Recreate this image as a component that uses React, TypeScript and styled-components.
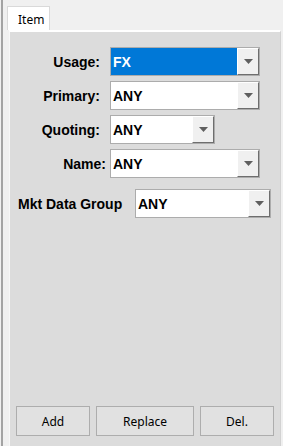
import styled, { createGlobalStyle } from "styled-components";

const GlobalStyle = createGlobalStyle`
  html, body {
    margin: 0;
    padding: 0;
    height: 446px;
    background: #f0f0f0;
    overflow: hidden;
  }
  #root {
    height: 446px;
  }
`;

const Frame = styled.div`
  display: flex;
  flex-direction: column;
  height: 446px;
  margin-left: 1px;
  border-left: 2px solid #a3a3a3;
  padding-top: 6px;
  box-sizing: border-box;
`;

const TabStrip = styled.div`
  display: flex;
  padding-left: 4px;
`;

const Tab = styled.div`
  position: relative;
  z-index: 1;
  width: 43px;
  height: 24px;
  box-sizing: border-box;
  border: 1px solid #d9d9d9;
  border-bottom: none;
  background: #ffffff;
  padding: 4px 0 0 10px;
  font-family: "Noto Sans", "DejaVu Sans", sans-serif;
  font-size: 12px;
  color: #000;
`;

const Panel = styled.div`
  flex: 1;
  display: flex;
  flex-direction: column;
  margin-left: 6px;
  width: 272px;
  box-sizing: border-box;
  background: #dcdcdc;
  border-top: 2px solid #ffffff;
  border-left: 1px solid #f7f7f7;
  border-right: 1px solid #d2d2d2;
  padding: 15px 0 10px 0;
`;

const Form = styled.div`
  display: flex;
  flex-direction: column;
  gap: 5px;
`;

const Row = styled.div<{ $top?: number }>`
  display: flex;
  align-items: center;
  height: 29px;
  margin-top: ${({ $top }) => $top ?? 0}px;
`;

const Label = styled.label<{ $width: number; $gap: number; $align?: string }>`
  width: ${({ $width }) => $width}px;
  margin-right: ${({ $gap }) => $gap}px;
  text-align: ${({ $align }) => $align ?? "right"};
  padding-left: ${({ $align }) => ($align === "left" ? 8 : 0)}px;
  box-sizing: border-box;
  font-family: "Liberation Sans", Arial, sans-serif;
  font-weight: bold;
  font-size: 14px;
  color: #000;
  white-space: nowrap;
`;

const Combo = styled.div<{ $width: number; $selected?: boolean }>`
  display: flex;
  width: ${({ $width }) => $width}px;
  height: 29px;
  box-sizing: border-box;
  border: 1px solid #acacac;
  background: ${({ $selected }) => ($selected ? "#0078d7" : "#ffffff")};
`;

const ComboValue = styled.div<{ $selected?: boolean }>`
  flex: 1;
  display: flex;
  align-items: center;
  padding-left: 2px;
  font-family: "Liberation Sans", Arial, sans-serif;
  font-weight: bold;
  font-size: 14px;
  color: ${({ $selected }) => ($selected ? "#ffffff" : "#000000")};
`;

const ArrowButton = styled.div`
  display: flex;
  align-items: center;
  justify-content: center;
  width: 22px;
  box-sizing: border-box;
  background: #f0f0f0;
  border-top: 1px solid #ffffff;
  border-left: 1px solid #ffffff;
  border-right: 1px solid #6e6e6e;
  border-bottom: 1px solid #6e6e6e;
`;

const ButtonBar = styled.div`
  display: flex;
  gap: 6px;
  margin-top: auto;
  padding-left: 6px;
`;

const ActionButton = styled.button<{ $width: number }>`
  width: ${({ $width }) => $width}px;
  height: 30px;
  border: 1px solid #adadad;
  background: #e1e1e1;
  font-family: "Noto Sans", "DejaVu Sans", sans-serif;
  font-size: 12px;
  color: #000;
  padding: 0;
`;

function ComboBox({ value, width, selected }: { value: string; width: number; selected?: boolean }) {
  return (
    <Combo $width={width} $selected={selected}>
      <ComboValue $selected={selected}>{value}</ComboValue>
      <ArrowButton>
        <svg width="9" height="5" viewBox="0 0 9 5">
          <path d="M0 0 H9 L4.5 5 Z" fill="#5f5f5f" />
        </svg>
      </ArrowButton>
    </Combo>
  );
}

export default function App() {
  return (
    <>
      <GlobalStyle />
      <Frame>
        <TabStrip>
          <Tab>Item</Tab>
        </TabStrip>
        <Panel>
          <Form>
            <Row>
              <Label $width={90} $gap={10}>Usage:</Label>
              <ComboBox value="FX" width={150} selected />
            </Row>
            <Row>
              <Label $width={90} $gap={10}>Primary:</Label>
              <ComboBox value="ANY" width={150} />
            </Row>
            <Row>
              <Label $width={90} $gap={10}>Quoting:</Label>
              <ComboBox value="ANY" width={105} />
            </Row>
            <Row>
              <Label $width={96} $gap={4}>Name:</Label>
              <ComboBox value="ANY" width={150} />
            </Row>
            <Row $top={6}>
              <Label $width={125} $gap={0} $align="left">Mkt Data Group</Label>
              <ComboBox value="ANY" width={136} />
            </Row>
          </Form>
          <ButtonBar>
            <ActionButton $width={74}>Add</ActionButton>
            <ActionButton $width={98}>Replace</ActionButton>
            <ActionButton $width={74}>Del.</ActionButton>
          </ButtonBar>
        </Panel>
      </Frame>
    </>
  );
}
